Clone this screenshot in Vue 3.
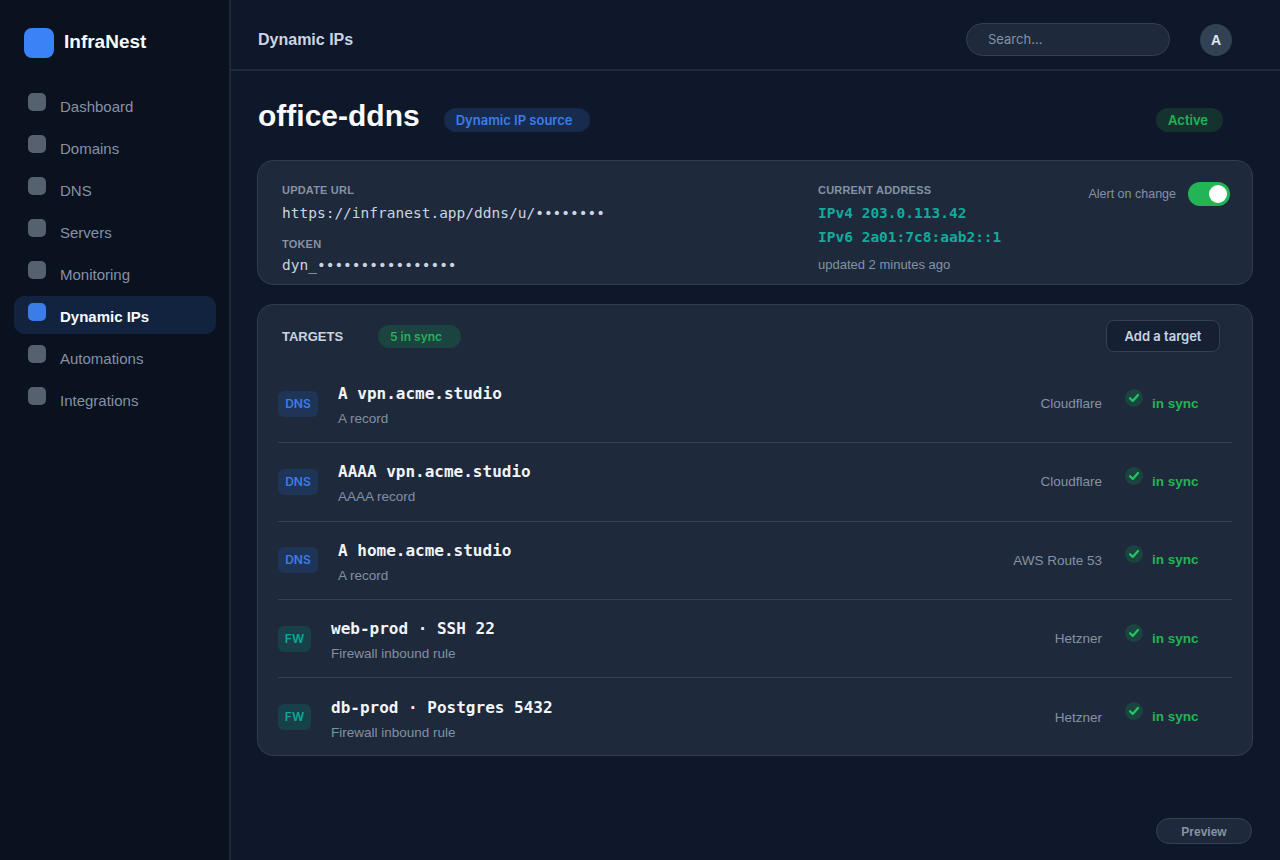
<script setup>
const navItems = ['Dashboard', 'Domains', 'DNS', 'Servers', 'Monitoring', 'Dynamic IPs', 'Automations', 'Integrations']

const targets = [
  { kind: 'DNS', name: 'A vpn.acme.studio', sub: 'A record', provider: 'Cloudflare' },
  { kind: 'DNS', name: 'AAAA vpn.acme.studio', sub: 'AAAA record', provider: 'Cloudflare' },
  { kind: 'DNS', name: 'A home.acme.studio', sub: 'A record', provider: 'AWS Route 53' },
  { kind: 'FW', name: 'web-prod · SSH 22', sub: 'Firewall inbound rule', provider: 'Hetzner' },
  { kind: 'FW', name: 'db-prod · Postgres 5432', sub: 'Firewall inbound rule', provider: 'Hetzner' }
]
</script>

<template>
  <div class="app">
    <aside class="sidebar">
      <div class="brand">
        <div class="logo"></div>
        <span>InfraNest</span>
      </div>
      <nav class="nav">
        <a v-for="item in navItems" :key="item" class="nav-item" :class="{ active: item === 'Dynamic IPs' }">
          <span class="nav-icon"></span>
          <span class="nav-label">{{ item }}</span>
        </a>
      </nav>
    </aside>

    <main class="main">
      <header class="topbar">
        <div class="topbar-title">Dynamic IPs</div>
        <div class="search">Search...</div>
        <div class="avatar">A</div>
      </header>

      <div class="content">
        <div class="page-head">
          <h1>office-ddns</h1>
          <span class="pill pill-blue">Dynamic IP source</span>
          <span class="pill pill-green">Active</span>
        </div>

        <section class="card source">
          <div class="source-left">
            <div class="label">UPDATE URL</div>
            <div class="mono">https://infranest.app/ddns/u/••••••••</div>
            <div class="label token-label">TOKEN</div>
            <div class="mono token">dyn_••••••••••••••••</div>
          </div>
          <div class="source-mid">
            <div class="label">CURRENT ADDRESS</div>
            <div class="mono addr">IPv4 203.0.113.42</div>
            <div class="mono addr">IPv6 2a01:7c8:aab2::1</div>
            <div class="updated">updated 2 minutes ago</div>
          </div>
          <div class="alert">
            <span>Alert on change</span>
            <span class="toggle"><span class="knob"></span></span>
          </div>
        </section>

        <section class="card targets">
          <div class="targets-head">
            <span class="targets-title">TARGETS</span>
            <span class="sync-pill">5 in sync</span>
            <button class="add-btn">Add a target</button>
          </div>
          <div v-for="t in targets" :key="t.name" class="row">
            <span class="kind" :class="t.kind === 'DNS' ? 'kind-dns' : 'kind-fw'">{{ t.kind }}</span>
            <div class="row-main">
              <div class="row-name">{{ t.name }}</div>
              <div class="row-sub">{{ t.sub }}</div>
            </div>
            <div class="provider">{{ t.provider }}</div>
            <div class="status">
              <span class="check">
                <svg width="12" height="12" viewBox="0 0 12 12" fill="none">
                  <path d="M2 6.2 4.7 8.9 10 3" stroke="#22c55e" stroke-width="2.3" stroke-linecap="round" stroke-linejoin="round" />
                </svg>
              </span>
              <span class="status-text">in sync</span>
            </div>
          </div>
        </section>
      </div>

      <button class="preview">Preview</button>
    </main>
  </div>
</template>

<style>
html,
body {
  margin: 0;
  background: #0f172a;
}
</style>

<style scoped>
.app {
  display: flex;
  width: 1280px;
  height: 860px;
  overflow: hidden;
  font-family: "Liberation Sans", Arial, sans-serif;
  background: #0f172a;
  color: #e2e8f0;
}

.sidebar {
  width: 231px;
  flex-shrink: 0;
  box-sizing: border-box;
  padding: 28px 13px 0 14px;
  background: #0a111f;
  border-right: 2px solid #1e293b;
}

.brand {
  display: flex;
  align-items: center;
  gap: 10px;
  padding-left: 10px;
  font-size: 19px;
  font-weight: 700;
  color: #f8fafc;
}

.brand span {
  position: relative;
  top: -1px;
}

.logo {
  width: 30px;
  height: 30px;
  border-radius: 8px;
  background: #3b82f6;
}

.nav {
  display: flex;
  flex-direction: column;
  gap: 4px;
  margin-top: 28px;
}

.nav-item {
  display: flex;
  align-items: flex-start;
  gap: 14px;
  height: 38px;
  box-sizing: border-box;
  padding: 7px 14px 0;
  border-radius: 10px;
  color: #8592a6;
  font-size: 15px;
}

.nav-icon {
  width: 18px;
  height: 18px;
  border-radius: 5px;
  background: #566170;
}

.nav-label {
  margin-top: 5px;
  line-height: 17px;
}

.nav-item.active {
  background: #12233f;
  color: #f8fafc;
  font-weight: 700;
}

.nav-item.active .nav-icon {
  background: #3b7de8;
}

.main {
  flex: 1;
  position: relative;
  min-width: 0;
}

.topbar {
  display: flex;
  align-items: center;
  height: 71px;
  box-sizing: border-box;
  padding: 10px 48px 0 27px;
  border-bottom: 2px solid #1e293b;
}

.topbar-title {
  flex: 1;
  font-size: 16px;
  font-weight: 700;
  color: #cbd5e1;
}

.search {
  width: 181px;
  height: 31px;
  padding-left: 21px;
  line-height: 31px;
  margin-right: 30px;
  border: 1px solid #334155;
  border-radius: 17px;
  background: #1e293b;
  color: #8592a6;
  font-size: 13px;
  font-family: Inter, "Liberation Sans", sans-serif;
}

.avatar {
  display: flex;
  align-items: center;
  justify-content: center;
  width: 32px;
  height: 32px;
  border-radius: 50%;
  background: #334155;
  color: #e2e8f0;
  font-size: 14px;
  font-weight: 700;
}

.content {
  padding: 0 28px 0 27px;
}

.page-head {
  display: flex;
  align-items: center;
  height: 89px;
}

h1 {
  margin: 0 24px 0 0;
  font-size: 30px;
  font-weight: 700;
  color: #f8fafc;
}

.pill {
  height: 24px;
  line-height: 24px;
  margin-top: 9px;
  border-radius: 12px;
  font-size: 13px;
  font-weight: 600;
  font-family: Inter, "Liberation Sans", sans-serif;
}

.pill-blue {
  padding: 0 17px 0 12px;
  background: #172b4f;
  color: #3b7de8;
}

.pill-green {
  margin-left: auto;
  margin-right: 29px;
  padding: 0 15px 0 12px;
  background: #14332f;
  color: #22b455;
}

.card {
  box-sizing: border-box;
  margin: 0 -1px;
  background: #1e293b;
  border: 1px solid #2f3d52;
  border-radius: 16px;
}

.source {
  display: flex;
  height: 125px;
  padding: 23px 22px 0 24px;
}

.source-left {
  width: 536px;
}

.label {
  font-size: 11px;
  line-height: 13px;
  font-weight: 700;
  letter-spacing: 0.2px;
  color: #8592a6;
}

.mono {
  margin-top: 7px;
  font-family: "DejaVu Sans Mono", "Liberation Mono", monospace;
  font-size: 14.5px;
  line-height: 18px;
  color: #cbd5e1;
}

.token-label {
  margin-top: 16px;
}

.token {
  margin-top: 5px;
}

.addr {
  margin-top: 6px;
  font-weight: 700;
  color: #14b8a6;
  opacity: 0.9;
}

.source-mid {
  flex: 1;
}

.source-mid .label + .addr {
  margin-top: 7px;
}

.updated {
  margin-top: 11px;
  font-size: 13px;
  line-height: 16px;
  color: #8592a6;
}

.alert {
  display: flex;
  align-items: center;
  gap: 12px;
  height: 24px;
  margin-top: -2px;
  font-size: 12.5px;
  color: #8592a6;
}

.toggle {
  display: flex;
  align-items: center;
  justify-content: flex-end;
  width: 42px;
  height: 24px;
  box-sizing: border-box;
  padding-right: 3px;
  border-radius: 12px;
  background: #22b455;
}

.knob {
  width: 18px;
  height: 18px;
  border-radius: 50%;
  background: #fff;
}

.targets {
  height: 452px;
  margin-top: 19px;
  padding: 0 20px;
}

.targets-head {
  display: flex;
  align-items: center;
  height: 60px;
  padding: 2px 12px 0 4px;
  box-sizing: border-box;
}

.targets-title {
  width: 96px;
  font-size: 13px;
  font-weight: 700;
  color: #cbd5e1;
}

.sync-pill {
  height: 23px;
  line-height: 23px;
  padding: 0 19px 0 12px;
  border-radius: 12px;
  background: #1b4340;
  color: #22b455;
  font-size: 12px;
  font-weight: 600;
  font-family: Inter, "Liberation Sans", sans-serif;
}

.add-btn {
  margin-left: auto;
  width: 114px;
  height: 32px;
  padding: 0;
  border: 1px solid #334155;
  border-radius: 8px;
  background: #172033;
  color: #cbd5e1;
  font-size: 13px;
  font-weight: 600;
  font-family: Inter, "Liberation Sans", sans-serif;
}

.row {
  display: flex;
  align-items: center;
  height: 78.33px;
  box-sizing: border-box;
  border-bottom: 1px solid #334155;
}

.row:last-child {
  border-bottom: none;
}

.kind {
  width: 40px;
  height: 26px;
  line-height: 26px;
  margin: 0 20px 0 0;
  text-align: center;
  border-radius: 6px;
  font-size: 12px;
  font-weight: 600;
  font-family: Inter, "Liberation Sans", sans-serif;
}

.kind-dns {
  background: #1f3557;
  color: #3b7de8;
}

.kind-fw {
  width: 33px;
  background: #17404a;
  color: #14a594;
}

.row-main {
  flex: 1;
  padding-top: 4px;
}

.row-name {
  font-family: "DejaVu Sans Mono", "Liberation Mono", monospace;
  font-size: 16px;
  font-weight: 700;
  line-height: 20px;
  color: #f1f5f9;
}

.row-sub {
  margin-top: 7px;
  font-size: 13.5px;
  line-height: 16px;
  color: #8290a4;
}

.provider {
  margin-right: 23px;
  font-size: 13.5px;
  color: #8592a6;
}

.status {
  display: flex;
  align-items: flex-start;
  gap: 9px;
  width: 107px;
}

.check {
  display: flex;
  align-items: center;
  justify-content: center;
  width: 18px;
  height: 18px;
  margin-top: -7px;
  border-radius: 50%;
  background: #1b4340;
}

.status-text {
  font-size: 13.5px;
  font-weight: 700;
  line-height: 16px;
  color: #22b455;
}

.preview {
  position: absolute;
  right: 28px;
  bottom: 16px;
  width: 96px;
  height: 26px;
  padding: 1px 0 0;
  border: 1px solid #334155;
  border-radius: 13px;
  background: #1e293b;
  color: #8592a6;
  font-size: 12px;
  font-weight: 700;
  font-family: "Liberation Sans", sans-serif;
}
</style>
